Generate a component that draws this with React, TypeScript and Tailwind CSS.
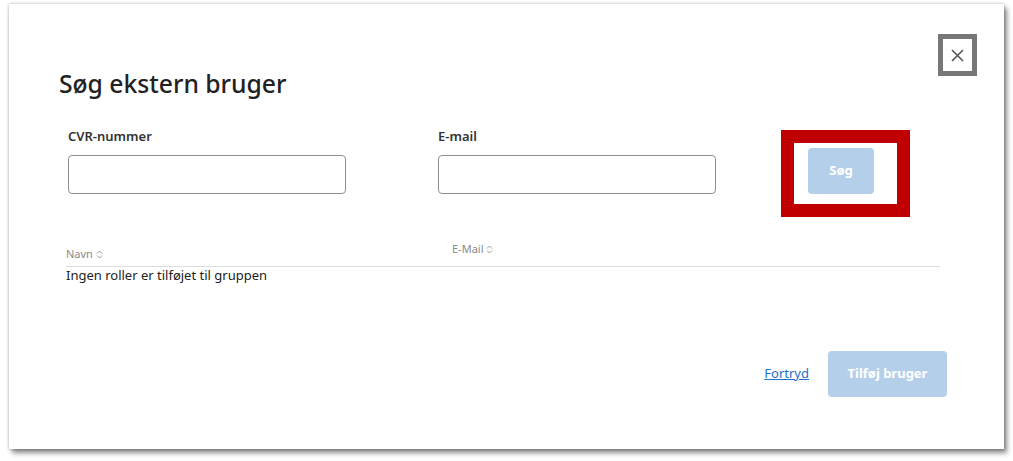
import React from "react";

const font = { fontFamily: '"Noto Sans", "Open Sans", sans-serif' };

function SortIcon() {
  return (
    <svg width="7" height="9" viewBox="0 0 7 9" className="ml-[3px] inline-block">
      <path d="M1 3.5 L3.5 1 L6 3.5" fill="none" stroke="#9a9a9a" strokeWidth="1" />
      <path d="M1 5.5 L3.5 8 L6 5.5" fill="none" stroke="#9a9a9a" strokeWidth="1" />
    </svg>
  );
}

export default function App() {
  return (
    <div className="w-[1013px] h-[461px] bg-white pt-[4px] pl-[9px]" style={font}>
      <div className="w-[995px] h-[445px] bg-white flex flex-col shadow-[0_0_3px_rgba(0,0,0,0.3),3px_4px_5px_rgba(0,0,0,0.45)]">
        {/* header */}
        <div className="flex justify-between items-start pl-[50px] pr-[27px] pt-[30px]">
          <h1 className="mt-[34px] text-[24.7px] leading-[32px] font-medium text-[#222]">Søg ekstern bruger</h1>
          <button className="w-[39px] h-[42px] border-[5px] border-[#777] bg-white flex items-center justify-center">
            <svg width="13" height="13" viewBox="0 0 13 13">
              <path d="M1 1 L12 12 M12 1 L1 12" stroke="#555" strokeWidth="1.6" />
            </svg>
          </button>
        </div>

        {/* form row */}
        <div className="flex items-start mt-[27px] pl-[59px]">
          <div className="w-[278px] flex flex-col">
            <label className="text-[13px] leading-[18px] font-semibold text-[#333]">CVR-nummer</label>
            <input className="mt-[10px] h-[39px] w-[278px] border border-[#8e8e8e] rounded-[4px] bg-white outline-none" />
          </div>
          <div className="w-[278px] ml-[92px] flex flex-col">
            <label className="text-[13px] leading-[18px] font-semibold text-[#333]">E-mail</label>
            <input className="mt-[10px] h-[39px] w-[278px] border border-[#8e8e8e] rounded-[4px] bg-white outline-none" />
          </div>
          <div className="ml-[65px] mt-[3px] w-[129px] h-[87px] border-[13px] border-[#c00000] pl-[14px] pt-[5px]">
            <button className="w-[66px] h-[46px] rounded-[4px] bg-[#b4cfe9] text-white text-[13px] font-bold">Søg</button>
          </div>
        </div>

        {/* table */}
        <div className="ml-[57px] w-[874px] mt-[20px]">
          <div className="flex items-end h-[30px] border-b border-[#dcdcdc]">
            <div className="w-[386px] pb-[5px] text-[11px] leading-[14px] text-[#8a8a8a] flex items-center">
              Navn<SortIcon />
            </div>
            <div className="pb-[10px] text-[11px] leading-[14px] text-[#8a8a8a] flex items-center">
              E-Mail<SortIcon />
            </div>
          </div>
          <div className="text-[13px] leading-[17px] text-[#222]">Ingen roller er tilføjet til gruppen</div>
        </div>

        {/* footer */}
        <div className="mt-auto flex justify-end items-center gap-[19px] pr-[57px] pb-[52px]">
          <a href="#" className="text-[13px] text-[#1f6fca] underline">Fortryd</a>
          <button className="w-[119px] h-[46px] rounded-[4px] bg-[#b4cfe9] text-white text-[13px] font-bold">Tilføj bruger</button>
        </div>
      </div>
    </div>
  );
}
